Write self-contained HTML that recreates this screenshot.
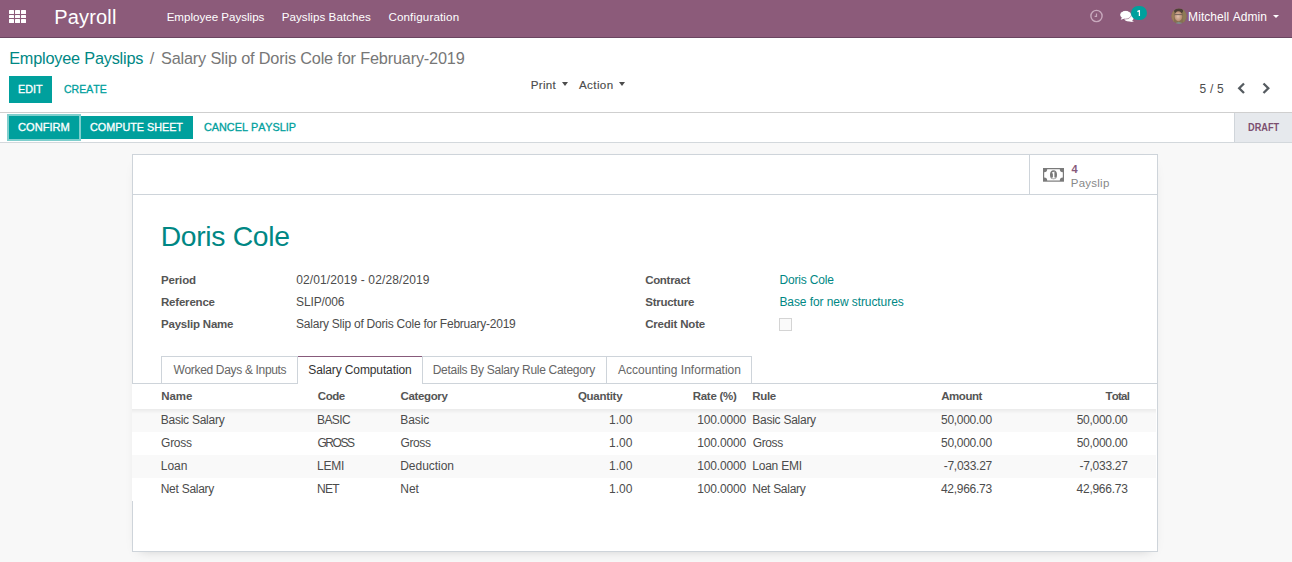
<!DOCTYPE html>
<html><head><meta charset="utf-8"><title>Salary Slip of Doris Cole for February-2019</title>
<style>
html,body{margin:0;padding:0;}
body{width:1292px;height:562px;position:relative;overflow:hidden;background:#fff;font-family:"Liberation Sans",sans-serif;}
.t{position:absolute;white-space:nowrap;line-height:20px;font-kerning:none;}
</style></head><body>
<div style="position:absolute;left:0;top:0;width:1292px;height:37px;background:#8c5b7a;"></div>
<div style="position:absolute;left:0;top:37px;width:1292px;height:1px;background:#6a4560;"></div>
<div style="position:absolute;left:9px;top:10.0px;width:5px;height:3.5px;background:#fff;border-radius:0.5px"></div>
<div style="position:absolute;left:9px;top:14.5px;width:5px;height:3.5px;background:#fff;border-radius:0.5px"></div>
<div style="position:absolute;left:9px;top:19.0px;width:5px;height:3.5px;background:#fff;border-radius:0.5px"></div>
<div style="position:absolute;left:15px;top:10.0px;width:5px;height:3.5px;background:#fff;border-radius:0.5px"></div>
<div style="position:absolute;left:15px;top:14.5px;width:5px;height:3.5px;background:#fff;border-radius:0.5px"></div>
<div style="position:absolute;left:15px;top:19.0px;width:5px;height:3.5px;background:#fff;border-radius:0.5px"></div>
<div style="position:absolute;left:21px;top:10.0px;width:5px;height:3.5px;background:#fff;border-radius:0.5px"></div>
<div style="position:absolute;left:21px;top:14.5px;width:5px;height:3.5px;background:#fff;border-radius:0.5px"></div>
<div style="position:absolute;left:21px;top:19.0px;width:5px;height:3.5px;background:#fff;border-radius:0.5px"></div>
<div class="t" style="left:54.36px;top:7px;font-size:20px;font-weight:normal;letter-spacing:0.141px;color:#fff;">Payroll</div>
<div class="t" style="left:166.65px;top:7px;font-size:11.6px;font-weight:normal;letter-spacing:-0.014px;color:#fff;">Employee Payslips</div>
<div class="t" style="left:281.65px;top:7px;font-size:11.6px;font-weight:normal;letter-spacing:0.063px;color:#fff;">Payslips Batches</div>
<div class="t" style="left:388.41px;top:7px;font-size:11.6px;font-weight:normal;letter-spacing:0.145px;color:#fff;">Configuration</div>
<div class="t" style="left:1188.12px;top:7px;font-size:12px;font-weight:normal;letter-spacing:0.065px;color:#fff;">Mitchell Admin</div>
<div style="position:absolute;left:1273px;top:15px;width:0;height:0;border-left:3.5px solid transparent;border-right:3.5px solid transparent;border-top:3.5px solid #fff"></div>
<svg style="position:absolute;left:1089px;top:9px" width="15" height="15" viewBox="0 0 15 15">
<circle cx="7.5" cy="7" r="5.6" fill="none" stroke="#c8a9bd" stroke-width="1.4"/>
<path d="M7.5 4.4 V7.3 H5.6" fill="none" stroke="#c8a9bd" stroke-width="1.2"/></svg>
<svg style="position:absolute;left:1116px;top:6px" width="22" height="18" viewBox="0 0 22 18">
<path d="M8 11.5 Q8.5 8.2 12.8 8.2 Q17.8 8.4 17.6 12.2 Q17.4 14.2 15.8 15 L18.2 15.9 Q15.4 16.2 13.4 15.6 Q8 15.6 8 11.5 Z" fill="#fff"/>
<ellipse cx="9.6" cy="8.8" rx="5.6" ry="4.1" fill="#fff" stroke="#8c5b7a" stroke-width="0.8"/>
<path d="M6 11.6 L4.6 13.8 L8.8 12.4 Z" fill="#fff"/>
<ellipse cx="9.6" cy="8.8" rx="5.2" ry="3.7" fill="#fff"/>
</svg>
<div style="position:absolute;left:1131.2px;top:5.8px;width:15.8px;height:14.4px;border-radius:8px;background:#00a09d;"></div>
<svg style="position:absolute;left:1131px;top:6px" width="16" height="14" viewBox="0 0 16 14">
<path d="M6.4 5.6 L8.4 4.6 V10" fill="none" stroke="#fff" stroke-width="1.25" stroke-linejoin="round"/></svg>
<svg style="position:absolute;left:1170.5px;top:8px" width="16" height="16" viewBox="0 0 16 16">
<defs><clipPath id="av"><circle cx="8" cy="8.1" r="7.6"/></clipPath>
<radialGradient id="fg" cx="0.45" cy="0.5" r="0.5"><stop offset="0" stop-color="#e2c3b0"/><stop offset="1" stop-color="#b98d72"/></radialGradient></defs>
<g clip-path="url(#av)">
<rect width="16" height="16" fill="#857052"/>
<rect x="0" y="0" width="3" height="16" fill="#9c7d5a"/>
<rect x="12" y="0" width="4" height="16" fill="#8d7a55"/>
<ellipse cx="7.6" cy="2.8" rx="4.5" ry="2.6" fill="#4d4036"/>
<ellipse cx="7.4" cy="8.2" rx="3.8" ry="5" fill="url(#fg)"/>
<path d="M3.8 6.6 H11.2" stroke="#6a5a55" stroke-width="0.9"/>
<path d="M3 16 Q7.5 12.5 13 16 Z" fill="#7b98a3"/>
</g></svg>
<div class="t" style="left:9.16px;top:48px;font-size:16.3px;font-weight:normal;letter-spacing:-0.205px;color:#008784;">Employee Payslips</div>
<div class="t" style="left:149.70px;top:48px;font-size:16.3px;font-weight:normal;letter-spacing:0.000px;color:#777;">/</div>
<div class="t" style="left:160.96px;top:48px;font-size:16.3px;font-weight:normal;letter-spacing:-0.177px;color:#777;">Salary Slip of Doris Cole for February-2019</div>
<div style="position:absolute;left:9px;top:76px;width:43px;height:27px;background:#00a09d;"></div>
<div class="t" style="left:18.01px;top:79px;font-size:11.2px;font-weight:normal;letter-spacing:0.000px;color:#fff;transform:scaleX(0.9698);transform-origin:0 0;-webkit-text-stroke:0.3px currentColor;">EDIT</div>
<div class="t" style="left:64.47px;top:79px;font-size:11.2px;font-weight:normal;letter-spacing:0.000px;color:#00a09d;transform:scaleX(0.9396);transform-origin:0 0;-webkit-text-stroke:0.3px currentColor;">CREATE</div>
<div class="t" style="left:530.65px;top:75px;font-size:11.6px;font-weight:normal;letter-spacing:0.321px;color:#4c4c4c;-webkit-text-stroke:0.15px currentColor;">Print</div>
<div style="position:absolute;left:562px;top:82px;width:0;height:0;border-left:3.5px solid transparent;border-right:3.5px solid transparent;border-top:4px solid #4c4c4c"></div>
<div class="t" style="left:578.98px;top:75px;font-size:11.6px;font-weight:normal;letter-spacing:0.387px;color:#4c4c4c;-webkit-text-stroke:0.15px currentColor;">Action</div>
<div style="position:absolute;left:619px;top:82px;width:0;height:0;border-left:3.5px solid transparent;border-right:3.5px solid transparent;border-top:4px solid #4c4c4c"></div>
<div class="t" style="left:1199.62px;top:79px;font-size:12px;font-weight:normal;letter-spacing:0.159px;color:#4c4c4c;">5 / 5</div>
<svg style="position:absolute;left:1236px;top:82px" width="36" height="13" viewBox="0 0 36 13">
<path d="M8 1.5 L3.2 6.2 L8 11" fill="none" stroke="#555b60" stroke-width="2.3"/>
<path d="M27.5 1.5 L32.3 6.2 L27.5 11" fill="none" stroke="#555b60" stroke-width="2.3"/></svg>
<div style="position:absolute;left:0;top:112px;width:1292px;height:1px;background:#cfcfcf;"></div>
<div style="position:absolute;left:0;top:142px;width:1292px;height:1px;background:#d3d8dc;"></div>
<div style="position:absolute;left:0;top:143px;width:1292px;height:419px;background:#f8f8f8;"></div>
<div style="position:absolute;left:7px;top:114px;width:74px;height:27px;background:#80cfcd;"></div>
<div style="position:absolute;left:9px;top:116px;width:70px;height:23px;background:#00a09d;"></div>
<div style="position:absolute;left:81px;top:116px;width:112px;height:23px;background:#00a09d;"></div>
<div class="t" style="left:18.34px;top:117px;font-size:10.6px;font-weight:normal;letter-spacing:0.000px;color:#fff;transform:scaleX(1.0489);transform-origin:0 0;-webkit-text-stroke:0.3px currentColor;">CONFIRM</div>
<div class="t" style="left:90.05px;top:117px;font-size:10.6px;font-weight:normal;letter-spacing:0.000px;color:#fff;transform:scaleX(1.0187);transform-origin:0 0;-webkit-text-stroke:0.3px currentColor;">COMPUTE SHEET</div>
<div class="t" style="left:204.35px;top:117px;font-size:10.6px;font-weight:normal;letter-spacing:0.000px;color:#00a09d;transform:scaleX(1.0220);transform-origin:0 0;-webkit-text-stroke:0.3px currentColor;">CANCEL PAYSLIP</div>
<div style="position:absolute;left:1234px;top:113px;width:58px;height:29px;background:#e6e9ed;border-left:1px solid #d0d5da;box-sizing:border-box"></div>
<div class="t" style="left:1248.18px;top:118px;font-size:10.2px;font-weight:bold;letter-spacing:0.000px;color:#7c4f70;transform:scaleX(0.9032);transform-origin:0 0;">DRAFT</div>
<div style="position:absolute;left:132px;top:154px;width:1026px;height:398px;background:#fff;border:1px solid #ced4da;box-sizing:border-box;box-shadow:0 5px 12px -8px rgba(0,0,0,0.25)"></div>
<div style="position:absolute;left:133px;top:194px;width:1024px;height:1px;background:#ced4da;"></div>
<div style="position:absolute;left:1029px;top:155px;width:1px;height:39px;background:#ced4da;"></div>
<svg style="position:absolute;left:1042.7px;top:168px" width="21" height="14" viewBox="0 0 21 14">
<rect x="0" y="0" width="21" height="13.7" fill="#7a7a7a"/>
<path d="M4.2 1.2 H16.8 A3 3 0 0 0 19.8 4.2 V9.5 A3 3 0 0 0 16.8 12.5 H4.2 A3 3 0 0 0 1.2 9.5 V4.2 A3 3 0 0 0 4.2 1.2 Z" fill="#fff"/>
<ellipse cx="10.5" cy="6.85" rx="3.5" ry="4.5" fill="#7a7a7a"/>
<path d="M9 4.6 L11.4 3.6 V9.6 H12.6 V10.5 H8.6 V9.6 H9.9 V5.3 L9 5.6 Z" fill="#fff"/>
</svg>
<div class="t" style="left:1071.53px;top:159px;font-size:11px;font-weight:bold;letter-spacing:0.000px;color:#875a7b;">4</div>
<div class="t" style="left:1070.76px;top:173px;font-size:11.5px;font-weight:normal;letter-spacing:0.242px;color:#888;">Payslip</div>
<div class="t" style="left:160.68px;top:226px;font-size:28.3px;font-weight:normal;letter-spacing:-0.314px;color:#008784;">Doris Cole</div>
<div class="t" style="left:161.03px;top:270px;font-size:11.5px;font-weight:bold;letter-spacing:-0.152px;color:#555555;">Period</div>
<div class="t" style="left:161.03px;top:292px;font-size:11.5px;font-weight:bold;letter-spacing:-0.206px;color:#555555;">Reference</div>
<div class="t" style="left:161.03px;top:314px;font-size:11.5px;font-weight:bold;letter-spacing:-0.212px;color:#555555;">Payslip Name</div>
<div class="t" style="left:296.13px;top:270px;font-size:12px;font-weight:normal;letter-spacing:0.116px;color:#4c4c4c;">02/01/2019 - 02/28/2019</div>
<div class="t" style="left:296.06px;top:292px;font-size:12px;font-weight:normal;letter-spacing:-0.143px;color:#4c4c4c;">SLIP/006</div>
<div class="t" style="left:296.06px;top:314px;font-size:12px;font-weight:normal;letter-spacing:-0.231px;color:#4c4c4c;">Salary Slip of Doris Cole for February-2019</div>
<div class="t" style="left:645.13px;top:270px;font-size:11.5px;font-weight:bold;letter-spacing:-0.295px;color:#555555;">Contract</div>
<div class="t" style="left:645.27px;top:292px;font-size:11.5px;font-weight:bold;letter-spacing:-0.262px;color:#555555;">Structure</div>
<div class="t" style="left:645.13px;top:314px;font-size:11.5px;font-weight:bold;letter-spacing:-0.191px;color:#555555;">Credit Note</div>
<div class="t" style="left:779.42px;top:270px;font-size:12px;font-weight:normal;letter-spacing:-0.178px;color:#008784;">Doris Cole</div>
<div class="t" style="left:779.42px;top:292px;font-size:12px;font-weight:normal;letter-spacing:-0.079px;color:#008784;">Base for new structures</div>
<div style="position:absolute;left:779px;top:318px;width:13px;height:13px;border:1px solid #d4d4d4;background:#fafafa;box-sizing:border-box"></div>
<div style="position:absolute;left:132px;top:383px;width:1026px;height:1px;background:#ced4da;"></div>
<div style="position:absolute;left:161px;top:356px;width:137px;height:27px;border:1px solid #ced4da;border-bottom:none;box-sizing:border-box;background:#fff"></div>
<div style="position:absolute;left:422px;top:356px;width:185px;height:27px;border:1px solid #ced4da;border-bottom:none;box-sizing:border-box;background:#fff"></div>
<div style="position:absolute;left:606px;top:356px;width:146px;height:27px;border:1px solid #ced4da;border-bottom:none;box-sizing:border-box;background:#fff"></div>
<div style="position:absolute;left:298px;top:356px;width:124px;height:28px;border-top:1px solid #875a7b;box-sizing:border-box;background:#fff"></div>
<div class="t" style="left:173.45px;top:360px;font-size:12px;font-weight:normal;letter-spacing:-0.326px;color:#666;">Worked Days &amp; Inputs</div>
<div class="t" style="left:308.26px;top:360px;font-size:12px;font-weight:normal;letter-spacing:-0.115px;color:#333;">Salary Computation</div>
<div class="t" style="left:432.72px;top:360px;font-size:12px;font-weight:normal;letter-spacing:-0.297px;color:#666;">Details By Salary Rule Category</div>
<div class="t" style="left:617.98px;top:360px;font-size:12px;font-weight:normal;letter-spacing:0.013px;color:#666;">Accounting Information</div>
<div style="position:absolute;left:132px;top:384px;width:1024px;height:117px;background:#fff;"></div>
<div style="position:absolute;left:132px;top:409px;width:1024px;height:23px;background:#f9f9f9;"></div>
<div style="position:absolute;left:132px;top:455px;width:1024px;height:23px;background:#f9f9f9;"></div>
<div style="position:absolute;left:132px;top:409px;width:1024px;height:5px;background:linear-gradient(rgba(0,0,0,0.06),rgba(0,0,0,0));"></div>
<div class="t" style="left:161.13px;top:386px;font-size:11.5px;font-weight:bold;letter-spacing:-0.053px;color:#555555;">Name</div>
<div class="t" style="left:317.83px;top:386px;font-size:11.5px;font-weight:bold;letter-spacing:-0.462px;color:#555555;">Code</div>
<div class="t" style="left:400.53px;top:386px;font-size:11.5px;font-weight:bold;letter-spacing:-0.359px;color:#555555;">Category</div>
<div class="t" style="left:577.93px;top:386px;font-size:11.5px;font-weight:bold;letter-spacing:-0.287px;color:#555555;">Quantity</div>
<div class="t" style="left:692.73px;top:386px;font-size:11.5px;font-weight:bold;letter-spacing:-0.281px;color:#555555;">Rate (%)</div>
<div class="t" style="left:752.23px;top:386px;font-size:11.5px;font-weight:bold;letter-spacing:-0.319px;color:#555555;">Rule</div>
<div class="t" style="left:941.31px;top:386px;font-size:11.5px;font-weight:bold;letter-spacing:-0.481px;color:#555555;">Amount</div>
<div class="t" style="left:1105.57px;top:386px;font-size:11.5px;font-weight:bold;letter-spacing:-0.782px;color:#555555;">Total</div>
<div class="t" style="left:160.72px;top:410px;font-size:12px;font-weight:normal;letter-spacing:-0.244px;color:#4c4c4c;">Basic Salary</div>
<div class="t" style="left:317.12px;top:410px;font-size:12px;font-weight:normal;letter-spacing:-0.643px;color:#4c4c4c;">BASIC</div>
<div class="t" style="left:400.22px;top:410px;font-size:12px;font-weight:normal;letter-spacing:-0.086px;color:#4c4c4c;">Basic</div>
<div class="t" style="left:608.99px;top:410px;font-size:12px;font-weight:normal;letter-spacing:0.042px;color:#4c4c4c;">1.00</div>
<div class="t" style="left:697.19px;top:410px;font-size:12px;font-weight:normal;letter-spacing:-0.153px;color:#4c4c4c;">100.0000</div>
<div class="t" style="left:752.32px;top:410px;font-size:12px;font-weight:normal;letter-spacing:-0.262px;color:#4c4c4c;">Basic Salary</div>
<div class="t" style="left:941.02px;top:410px;font-size:12px;font-weight:normal;letter-spacing:-0.292px;color:#4c4c4c;">50,000.00</div>
<div class="t" style="left:1076.72px;top:410px;font-size:12px;font-weight:normal;letter-spacing:-0.292px;color:#4c4c4c;">50,000.00</div>
<div class="t" style="left:161.10px;top:433px;font-size:12px;font-weight:normal;letter-spacing:-0.292px;color:#4c4c4c;">Gross</div>
<div class="t" style="left:317.50px;top:433px;font-size:12px;font-weight:normal;letter-spacing:-1.472px;color:#4c4c4c;">GROSS</div>
<div class="t" style="left:400.60px;top:433px;font-size:12px;font-weight:normal;letter-spacing:-0.417px;color:#4c4c4c;">Gross</div>
<div class="t" style="left:608.99px;top:433px;font-size:12px;font-weight:normal;letter-spacing:0.042px;color:#4c4c4c;">1.00</div>
<div class="t" style="left:697.19px;top:433px;font-size:12px;font-weight:normal;letter-spacing:-0.153px;color:#4c4c4c;">100.0000</div>
<div class="t" style="left:752.70px;top:433px;font-size:12px;font-weight:normal;letter-spacing:-0.367px;color:#4c4c4c;">Gross</div>
<div class="t" style="left:941.02px;top:433px;font-size:12px;font-weight:normal;letter-spacing:-0.292px;color:#4c4c4c;">50,000.00</div>
<div class="t" style="left:1076.72px;top:433px;font-size:12px;font-weight:normal;letter-spacing:-0.292px;color:#4c4c4c;">50,000.00</div>
<div class="t" style="left:160.72px;top:456px;font-size:12px;font-weight:normal;letter-spacing:0.023px;color:#4c4c4c;">Loan</div>
<div class="t" style="left:317.12px;top:456px;font-size:12px;font-weight:normal;letter-spacing:-0.272px;color:#4c4c4c;">LEMI</div>
<div class="t" style="left:400.22px;top:456px;font-size:12px;font-weight:normal;letter-spacing:-0.034px;color:#4c4c4c;">Deduction</div>
<div class="t" style="left:608.99px;top:456px;font-size:12px;font-weight:normal;letter-spacing:0.042px;color:#4c4c4c;">1.00</div>
<div class="t" style="left:697.19px;top:456px;font-size:12px;font-weight:normal;letter-spacing:-0.153px;color:#4c4c4c;">100.0000</div>
<div class="t" style="left:752.32px;top:456px;font-size:12px;font-weight:normal;letter-spacing:-0.239px;color:#4c4c4c;">Loan EMI</div>
<div class="t" style="left:943.77px;top:456px;font-size:12px;font-weight:normal;letter-spacing:-0.284px;color:#4c4c4c;">-7,033.27</div>
<div class="t" style="left:1079.47px;top:456px;font-size:12px;font-weight:normal;letter-spacing:-0.284px;color:#4c4c4c;">-7,033.27</div>
<div class="t" style="left:160.72px;top:479px;font-size:12px;font-weight:normal;letter-spacing:-0.268px;color:#4c4c4c;">Net Salary</div>
<div class="t" style="left:317.12px;top:479px;font-size:12px;font-weight:normal;letter-spacing:-0.820px;color:#4c4c4c;">NET</div>
<div class="t" style="left:400.22px;top:479px;font-size:12px;font-weight:normal;letter-spacing:-0.001px;color:#4c4c4c;">Net</div>
<div class="t" style="left:608.99px;top:479px;font-size:12px;font-weight:normal;letter-spacing:0.042px;color:#4c4c4c;">1.00</div>
<div class="t" style="left:697.19px;top:479px;font-size:12px;font-weight:normal;letter-spacing:-0.153px;color:#4c4c4c;">100.0000</div>
<div class="t" style="left:752.32px;top:479px;font-size:12px;font-weight:normal;letter-spacing:-0.290px;color:#4c4c4c;">Net Salary</div>
<div class="t" style="left:940.92px;top:479px;font-size:12px;font-weight:normal;letter-spacing:-0.273px;color:#4c4c4c;">42,966.73</div>
<div class="t" style="left:1076.62px;top:479px;font-size:12px;font-weight:normal;letter-spacing:-0.273px;color:#4c4c4c;">42,966.73</div>
</body></html>
